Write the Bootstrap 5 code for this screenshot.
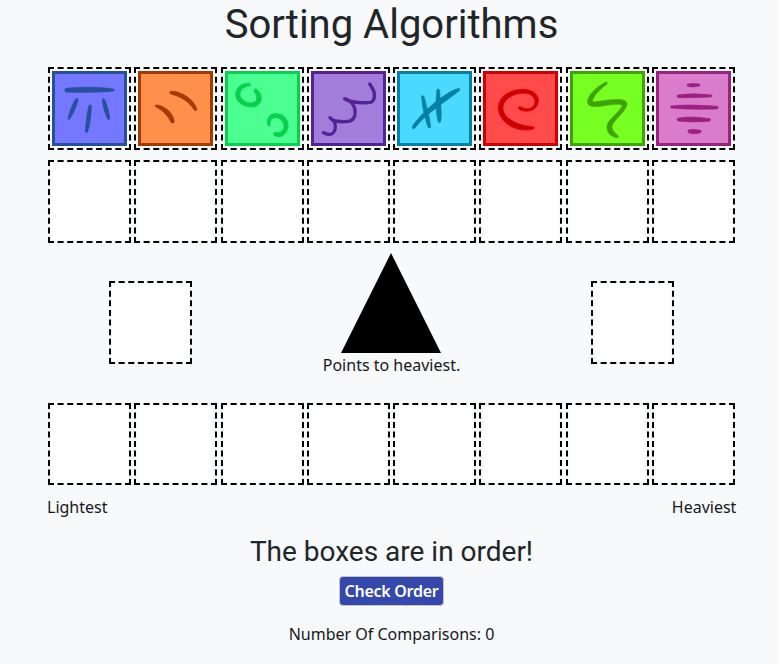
<!DOCTYPE html>
<html lang="en">
<head>
<meta charset="utf-8">
<meta name="viewport" content="width=device-width, initial-scale=1">
<title>Sorting Algorithms</title>
<link rel="stylesheet" href="https://cdn.jsdelivr.net/npm/bootstrap@5.3.0/dist/css/bootstrap.min.css">
<style>
body{background:#f7f9fb;font-family:"Noto Sans",sans-serif;color:#16181c;overflow:hidden}
h1,h3{font-family:Roboto,sans-serif;font-weight:400;line-height:1.2;color:#212529}
h1{font-size:40px;padding-top:1px}
h3{font-size:28px;margin:16px 0 7px}
.board{width:687px;margin-left:48px}
.boxes{margin-top:18px}
.spares{margin-top:10px}
.slot{width:83px;height:83px;border:2px dashed #000;background:#fff content-box;padding:1px}
.sorted .slot{height:82px}
.tile{width:75px;height:75px;display:block;margin:1px}
.tile rect{fill:var(--face);stroke:var(--ink);stroke-width:9}
.tile path{fill:var(--ink);stroke:var(--ink);stroke-width:2}
.tile .line{fill:none;stroke-width:10;stroke-linecap:round;stroke-linejoin:round}
.blue{--face:#7577ff;--ink:#25509c}
.orange{--face:#ff904b;--ink:#a53a00}
.mint{--face:#4bff91;--ink:#08d04d}
.violet{--face:#a37ddc;--ink:#532396}
.aqua{--face:#4bdaff;--ink:#0680a4}
.red{--face:#ff4b4b;--ink:#cf0000}
.lime{--face:#77ff22;--ink:#3fa306}
.pink{--face:#d97cc9;--ink:#9a2180}
.scale{padding:38px 61px 0;height:160px}
.pointer{width:102px;height:100px;display:block;margin:-28px auto 0}
.ends{margin:10px -1.4px 0 -1px}
.check{width:105px;height:30px;background:#3548ac;color:#fff;border:1px solid #c3c4cb;border-radius:4px;font-weight:600;font-size:16px;letter-spacing:-.27px;line-height:1;padding:0}
</style>
</head>
<body>
<main class="board text-center">
  <h1 class="mb-0">Sorting Algorithms</h1>
  <div class="boxes d-flex justify-content-between">
    <div class="slot"><svg class="tile blue" viewBox="36 33 225 225"><rect x="40.500" y="37.500" width="216" height="216"/>
      <path d="M76 86C98 81 185 79 222 88Q226 91 218 94C184 97 110 98 77 96Q72 91 76 86ZM108 116Q115 114 114 121C109 140 96 170 88 178Q83 179 84 174C89 153 99 129 108 116ZM147 136Q152 132 154 138C154 164 149 201 142 217Q137 220 136 213C138 185 142 153 147 136ZM187 117Q191 114 195 121C202 138 209 162 209 177Q206 182 202 176C194 158 188 137 187 117Z"/></svg></div>
    <div class="slot"><svg class="tile orange" viewBox="294 33 225 225"><rect x="298.500" y="37.500" width="216" height="216"/>
      <path d="M391 94C418 91 463 116 471 149Q468 155 462 149C446 124 423 110 392 102Q387 98 391 94ZM346 135C369 133 401 158 403 185Q399 193 393 187C383 166 369 152 349 142Q344 138 346 135Z"/></svg></div>
    <div class="slot"><svg class="tile mint" viewBox="30 33 225 225"><rect x="34.500" y="37.500" width="216" height="216"/>
      <path d="M105 70C77 66 59 88 62 109C69 137 105 147 125 138C147 125 141 99 124 87Q116 85 117 93C126 107 128 121 119 126C101 134 77 121 75 105C75 89 87 79 104 78Q110 74 105 70ZM158 194C153 174 166 159 187 161C218 164 228 198 212 218C202 233 184 233 178 226Q173 218 180 217C203 222 211 202 204 188C195 171 177 169 168 179C163 186 167 192 164 198Q160 200 158 194Z"/></svg></div>
    <div class="slot"><svg class="tile violet" viewBox="288 33 225 225"><rect x="292.500" y="37.500" width="216" height="216"/>
      <path class="line" d="M464 72C489 105 478 128 459 128C431 129 403 127 389 116C431 128 428 183 399 184C378 187 353 184 345 173C370 186 363 225 342 223Q333 223 325 218"/></svg></div>
    <div class="slot"><svg class="tile aqua" viewBox="27 33 225 225"><rect x="31.500" y="37.500" width="216" height="216"/>
      <path d="M213 85C175 93 97 159 73 200Q72 209 80 205C113 160 175 124 214 92Q218 87 213 85Z"/><path d="M101 108Q104 103 109 112C116 143 126 173 128 202Q124 207 120 201C111 176 101 132 101 108Z"/><path d="M147 89Q151 83 155 91C156 128 163 157 158 185Q154 192 150 184C144 158 142 119 147 89Z"/></svg></div>
    <div class="slot"><svg class="tile red" viewBox="285 33 225 225"><rect x="289.500" y="37.500" width="216" height="216"/>
      <path d="M392 141C390 152 406 155 423 153C447 150 457 124 448 109C431 76 367 86 345 110C316 140 335 179 367 198C387 211 424 214 439 205Q441 201 434 200C392 198 341 175 345 140C348 111 392 94 420 101C448 109 448 143 419 146C406 147 402 139 395 140Z"/></svg></div>
    <div class="slot"><svg class="tile lime" viewBox="24 33 225 225"><rect x="28.500" y="37.500" width="216" height="216"/>
      <path d="M133 66C105 78 72 110 77 130C83 148 126 136 159 133C175 132 184 133 179 141C167 161 137 179 135 199C134 218 147 232 167 233Q171 230 166 225C151 213 146 202 153 191C164 174 191 153 195 133C195 114 164 119 141 120C122 122 88 129 91 123C96 103 120 83 135 72Q137 67 133 66Z"/></svg></div>
    <div class="slot"><svg class="tile pink" viewBox="282 33 225 225"><rect x="286.500" y="37.500" width="216" height="216"/>
      <path d="M376 73Q385 69 412 72Q418 76 410 79Q389 83 377 79Q373 76 376 73ZM346 105Q396 98 449 105Q452 110 446 111Q396 114 347 113Q343 109 346 105ZM327 138Q374 132 467 139Q472 143 465 147Q378 149 327 144Q324 141 327 138ZM346 175Q385 167 444 176Q448 180 442 184Q391 188 348 183Q343 179 346 175ZM379 210Q391 206 416 211Q420 214 414 219Q391 224 380 218Q375 214 379 210Z"/></svg></div>
  </div>
  <div class="spares d-flex justify-content-between">
    <div class="slot"></div><div class="slot"></div><div class="slot"></div><div class="slot"></div><div class="slot"></div><div class="slot"></div><div class="slot"></div><div class="slot"></div>
  </div>
  <div class="scale d-flex justify-content-between align-items-start">
    <div class="slot"></div>
    <div><svg class="pointer" viewBox="0 0 102 100"><path d="M50 0L100 100H0Z"/></svg>Points to heaviest.</div>
    <div class="slot"></div>
  </div>
  <div class="sorted d-flex justify-content-between">
    <div class="slot"></div><div class="slot"></div><div class="slot"></div><div class="slot"></div><div class="slot"></div><div class="slot"></div><div class="slot"></div><div class="slot"></div>
  </div>
  <div class="ends d-flex justify-content-between"><span>Lightest</span><span>Heaviest</span></div>
  <h3>The boxes are in order!</h3>
  <button class="check" type="button">Check Order</button>
  <p class="mt-3 mb-0">Number Of Comparisons: 0</p>
</main>
<script src="https://cdn.jsdelivr.net/npm/bootstrap@5.3.0/dist/js/bootstrap.bundle.min.js"></script>
</body>
</html>
